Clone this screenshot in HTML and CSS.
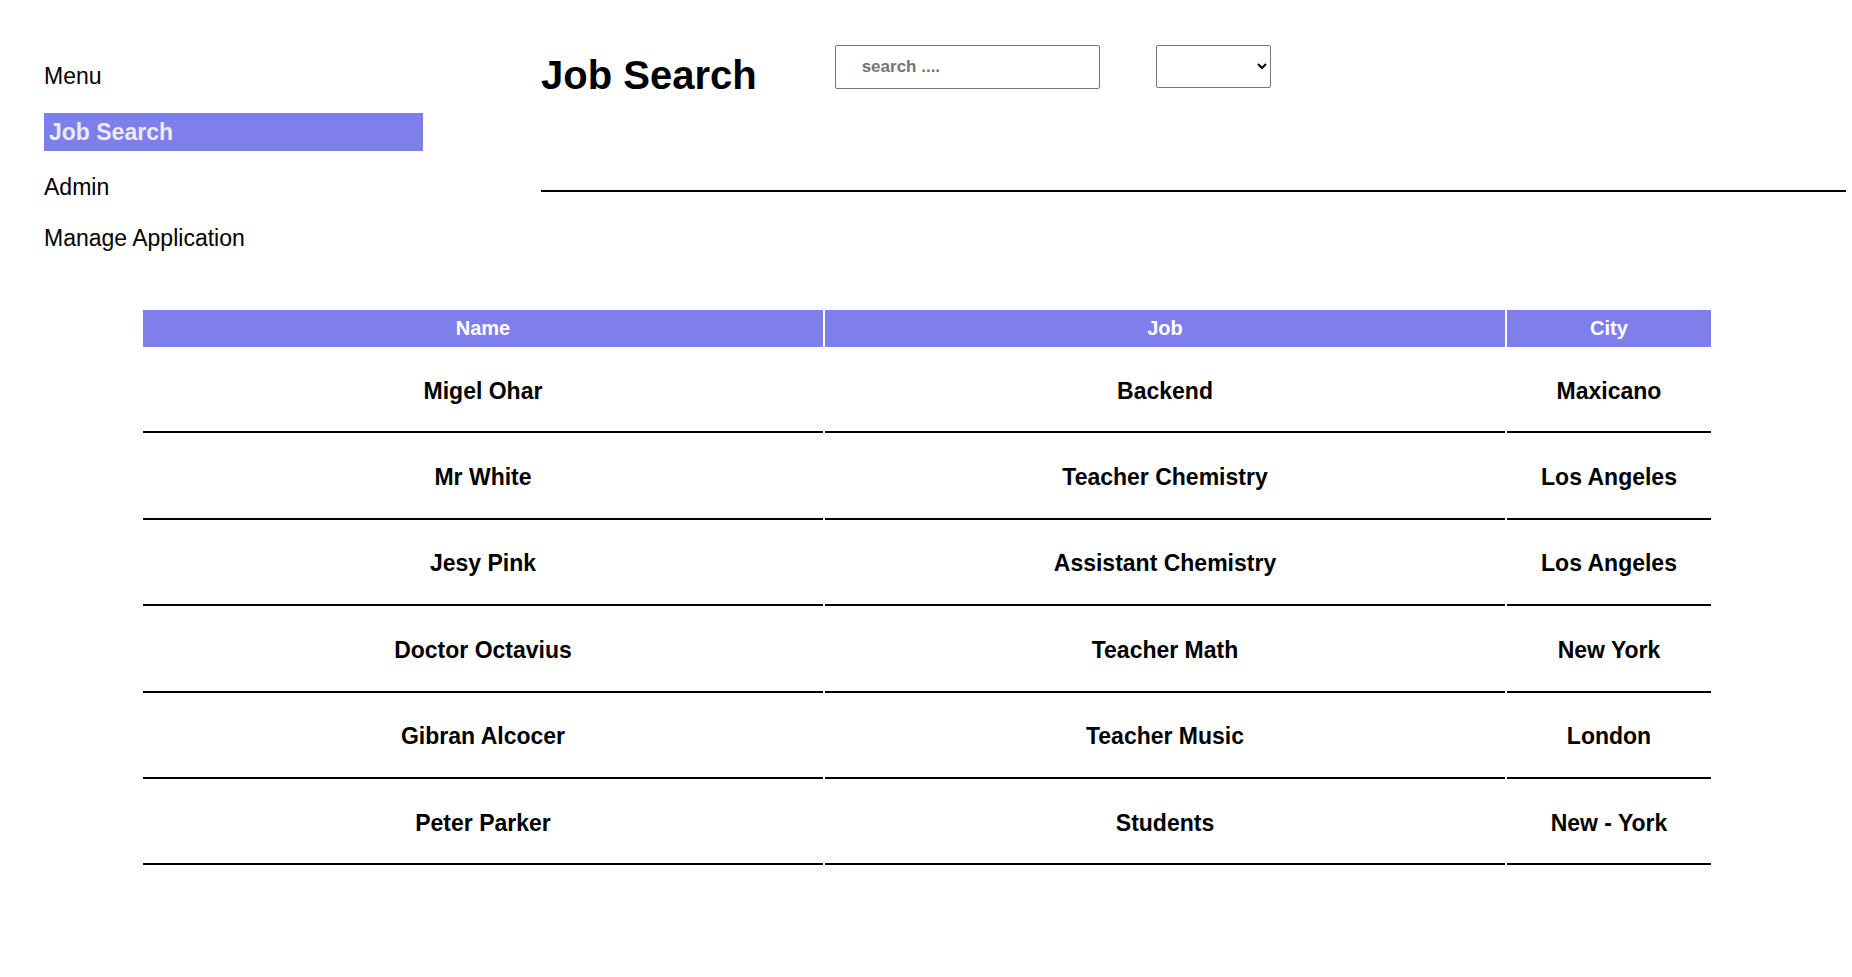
FILE: index.html
```html
<!DOCTYPE html>
<html lang="en">
<head>
<meta charset="utf-8">
<title>Job Search</title>
<link rel="stylesheet" href="styles.css">
</head>
<body>
<div class="top">
  <nav class="sidebar">
    <div class="menu-title">Menu</div>
    <div class="nav-active">Job Search</div>
    <div class="nav-item nav-admin">Admin</div>
    <div class="nav-item">Manage Application</div>
  </nav>
  <main class="main">
    <div class="header-row">
      <h1 class="title">Job Search</h1>
      <input class="search" type="text" placeholder="search ....">
      <select class="filter"><option></option></select>
    </div>
    <hr class="rule">
  </main>
</div>
<table class="jobs">
  <thead>
    <tr><th class="col-name">Name</th><th class="col-job">Job</th><th class="col-city">City</th></tr>
  </thead>
  <tbody>
    <tr><td>Migel Ohar</td><td>Backend</td><td>Maxicano</td></tr>
    <tr><td>Mr White</td><td>Teacher Chemistry</td><td>Los Angeles</td></tr>
    <tr><td>Jesy Pink</td><td>Assistant Chemistry</td><td>Los Angeles</td></tr>
    <tr><td>Doctor Octavius</td><td>Teacher Math</td><td>New York</td></tr>
    <tr><td>Gibran Alcocer</td><td>Teacher Music</td><td>London</td></tr>
    <tr><td>Peter Parker</td><td>Students</td><td>New - York</td></tr>
  </tbody>
</table>
</body>
</html>
```
FILE: styles.css
```css
html, body {
  margin: 0;
  padding: 0;
  background: #ffffff;
}
body {
  font-family: "Liberation Sans", Arial, sans-serif;
  color: #000;
}
.top {
  display: flex;
  align-items: flex-start;
  padding: 45px 6px 0 44px;
}
.sidebar {
  width: 379px;
  flex: none;
  margin-right: 118px;
  padding-top: 12px;
  display: flex;
  flex-direction: column;
  font-size: 23px;
}
.menu-title,
.nav-active,
.nav-item {
  height: 38px;
  line-height: 38px;
  white-space: nowrap;
}
.menu-title {
  margin-bottom: 18px;
}
.nav-active {
  background: #7f7fec;
  color: #ececf8;
  font-weight: bold;
  padding-left: 5px;
  margin-bottom: 17px;
}
.nav-admin {
  margin-bottom: 13px;
}
.main {
  flex: 1;
  min-width: 0;
}
.header-row {
  display: flex;
  align-items: flex-start;
}
.title {
  margin: 6px 78px 2px 0;
  font-size: 40px;
  line-height: 48px;
  font-weight: bold;
  white-space: nowrap;
}
.search {
  box-sizing: border-box;
  width: 265px;
  height: 44px;
  border: 1px solid #767676;
  border-radius: 2px;
  padding: 0 0 0 26px;
  margin: 0 56px 0 0;
  font-family: "Liberation Sans", Arial, sans-serif;
  font-size: 17px;
  font-weight: bold;
  color: #333;
  background: #fff;
  outline: none;
}
.search::placeholder {
  color: #757575;
}
.filter {
  box-sizing: border-box;
  width: 115px;
  height: 43px;
  border: 1px solid #767676;
  border-radius: 2px;
  background: #fff;
  margin: 0;
  font-family: "Liberation Sans", Arial, sans-serif;
  font-size: 16px;
}
.rule {
  margin: 89px 0 0 0;
  border: none;
  height: 2px;
  background: #000;
}
.jobs {
  width: 1572px;
  table-layout: fixed;
  margin: 51px 0 0 141px;
  border-collapse: separate;
  border-spacing: 2px;
  text-align: center;
}
.jobs th {
  background: #7f7fec;
  color: #fff;
  font-size: 20px;
  font-weight: bold;
  height: 37px;
  padding: 0;
}
.col-name { width: 680px; }
.col-job { width: 680px; }
.col-city { width: 204px; }
.jobs td {
  font-size: 23px;
  font-weight: bold;
  height: 80.4px;
  padding: 2px 0 0 0;
  border-bottom: 2px solid #000;
}
```
